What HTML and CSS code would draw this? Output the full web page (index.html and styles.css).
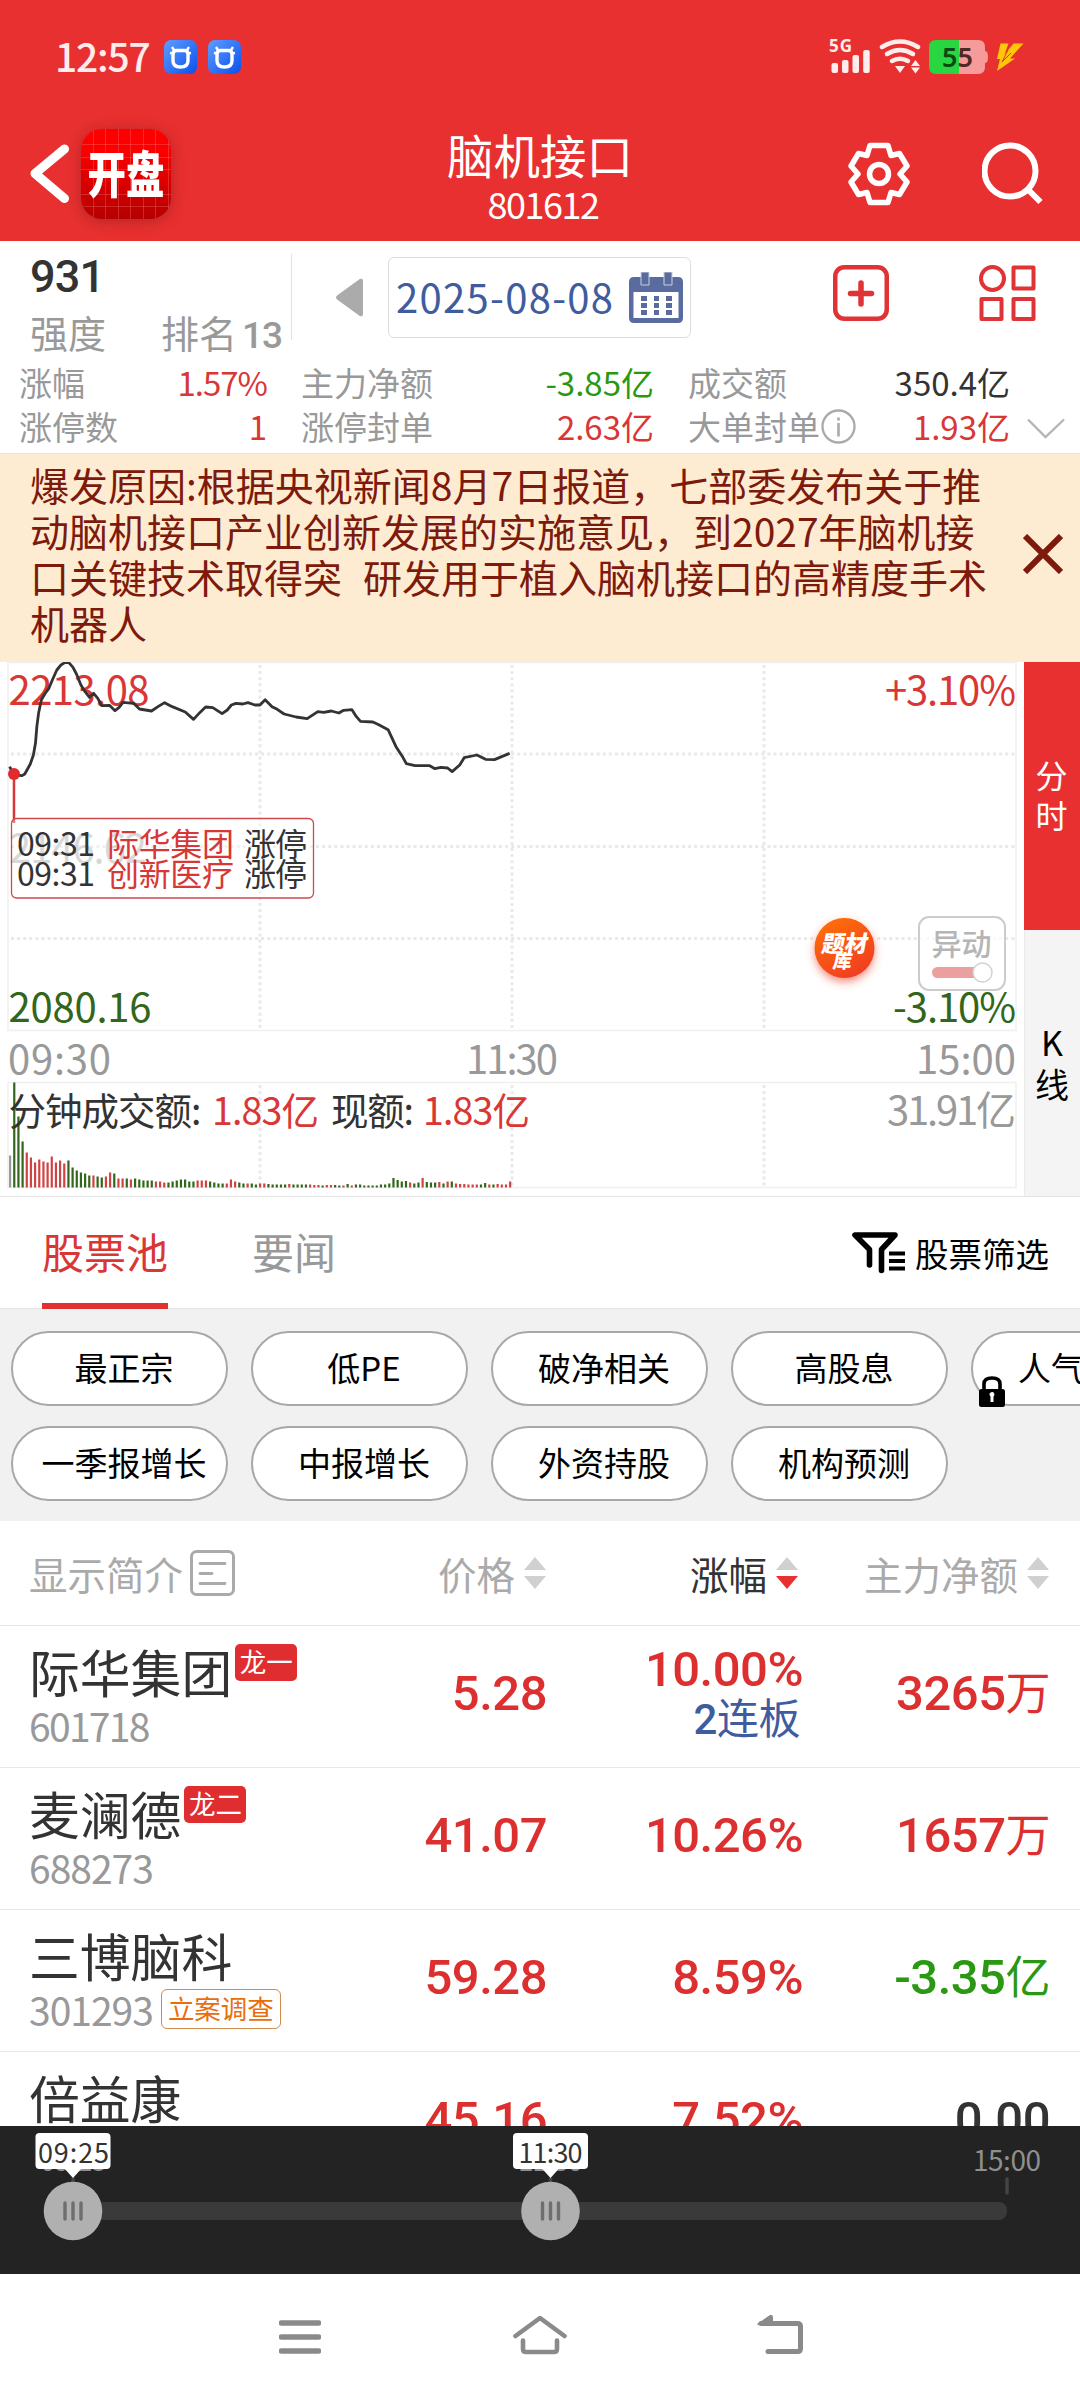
FILE: index.html
```html
<!DOCTYPE html>
<html lang="zh-CN">
<head>
<meta charset="utf-8">
<title>脑机接口 801612</title>
<link rel="stylesheet" href="styles.css">
</head>
<body>
<div class="phone">
  <header class="top">
    <div class="status">
      <div class="status-left">
        <span class="clock">12:57</span>
        <svg class="app-dot" width="33" height="34" viewBox="0 0 33 34"><defs><linearGradient id="blue" x1="0" y1="0" x2="1" y2="1"><stop offset="0" stop-color="#5f9dff"/><stop offset="1" stop-color="#0a50ee"/></linearGradient></defs><rect width="33" height="34" rx="7" fill="url(#blue)"/><path d="M12.500 10.500h8q3.500 0 3.500 4v6q0 6.500-7.500 6.500T9 20.500v-6q0-4 3.500-4z" fill="none" stroke="#fff" stroke-width="3.400"/><path d="M8 7l2.500 4M25 7l-2.500 4M6 13l4 .5M27 13l-4 .5" stroke="#fff" stroke-width="2.400"/></svg>
        <svg class="app-dot" width="33" height="34" viewBox="0 0 33 34"><rect width="33" height="34" rx="7" fill="url(#blue)"/><path d="M12.500 10.500h8q3.500 0 3.500 4v6q0 6.500-7.500 6.500T9 20.500v-6q0-4 3.500-4z" fill="none" stroke="#fff" stroke-width="3.400"/><path d="M8 7l2.500 4M25 7l-2.500 4M6 13l4 .5M27 13l-4 .5" stroke="#fff" stroke-width="2.400"/></svg>
      </div>
      <svg width="200" height="40" viewBox="826 37 200 40">
        <text class="net" x="829" y="52" textLength="23">5G</text>
        <g fill="#ffecec"><rect x="831.500" y="63" width="6.500" height="10" rx="2"/><rect x="842" y="60" width="6.500" height="13" rx="2"/><rect x="852.500" y="55" width="6.500" height="18" rx="2"/><rect x="863.200" y="50" width="6.500" height="23" rx="2"/><path d="M895 66h10l-5 7z"/><path d="M911 66l4.500-6 4.500 6zM911 67.500l4.500 6 4.500-6z"/></g>
        <g fill="none" stroke="#ffecec" stroke-width="4.500" stroke-linecap="round"><path d="M882 47q18-11 36 0"/><path d="M887 54q13-8 26 0"/><path d="M892 61q8-4.500 16 0"/></g>
        <path d="M959 40h19q7 0 7 7v4q3 0 3 6t-3 6v4q0 7-7 7h-19z" fill="#f79a9a"/>
        <path d="M959 40h-23q-7 0-7 7v20q0 7 7 7h23z" fill="#27d640"/>
        <text class="batt" x="942" y="67" textLength="15" fill="#0a4a12">5</text><text class="batt" x="957.500" y="67" textLength="15" fill="#4e2727">5</text>
        <path d="M1000.500 43.500h8l-4 11 9-11h10l-13.500 15h5L997 71l3-12h-3z" fill="#ffc60a"/><path d="M1008 50l-6 12 9-9" stroke="#e83030" stroke-width="1" fill="none"/>
      </svg>
    </div>
    <div class="titlebar">
      <div class="title-left">
        <svg width="40" height="60" viewBox="0 0 40 60"><path d="M34.500 5L5 29.500 34.500 54.500" fill="none" stroke="#fff" stroke-width="9" stroke-linecap="round" stroke-linejoin="round"/></svg>
        <div class="logo"><span>开盘</span></div>
      </div>
      <div class="title-mid"><div class="title">脑机接口</div><div class="subtitle">801612</div></div>
      <div class="title-right">
        <svg width="62" height="64" viewBox="-31 -32 62 64"><g fill="none" stroke="#fff" stroke-width="5.500" stroke-linejoin="round"><path d="M-9-28.500H9L12-18.500 20.500-20.500 28-8 21 0 28 8 20.500 20.500 12 18.500 9 28.500H-9L-12 18.500-20.500 20.500-28 8-21 0-28-8-20.500-20.500-12-18.500z"/><circle r="9.500"/></g></svg>
        <svg width="62" height="64" viewBox="0 0 62 64"><circle cx="28" cy="29" r="25.500" fill="none" stroke="#fff" stroke-width="6"/><path d="M45.500 47L58.500 60" stroke="#fff" stroke-width="6"/></svg>
      </div>
    </div>
  </header>

  <section class="info">
    <div class="info-top">
      <div class="score">
        <div class="score-num">931</div>
        <div class="score-sub"><span>强度</span><span class="rank">排名<b>13</b></span></div>
      </div>
      <svg class="prev" width="29" height="39" viewBox="0 0 29 39"><path d="M25 2L3 18q-2 1.500 0 3L25 37q2 1 2-1V3q0-2-2-1z" fill="#ababab" stroke="#ababab" stroke-width="2"/></svg>
      <div class="date"><span>2025-08-08</span>
        <svg width="54" height="51" viewBox="0 0 54 51"><path d="M5 5h44q5 0 5 5v36q0 5-5 5H5q-5 0-5-5V10q0-5 5-5z" fill="#5a6c9f"/><path d="M4.500 20h45v26h-45z" fill="#fff"/><path d="M12 0h8v13h-8zM35 0h8v13h-8z" fill="#5a6c9f" stroke="#c9d0e2"/><g fill="#5a6c9f"><path d="M12 24h6v5h-6zM25 24h5v5h-5zM37 24h6v5h-6zM12 31h6v5h-6zM25 31h5v5h-5zM37 31h6v5h-6zM12 38h6v5h-6zM25 38h5v5h-5zM37 38h6v5h-6z"/></g></svg>
      </div>
      <svg class="add" width="56" height="56" viewBox="0 0 56 56"><g fill="none" stroke="#df3335" stroke-width="4.500"><rect x="2.250" y="2.250" width="51.500" height="51.500" rx="9"/><path d="M28 18v21M17.500 28.500h21" stroke-width="5.500" stroke-linecap="round"/></g></svg>
      <svg class="apps" width="57" height="56" viewBox="0 0 57 56"><g fill="none" stroke="#df3335" stroke-width="4"><circle cx="13.500" cy="13.500" r="11.500"/><path d="M34.500 2.500h20v21h-20zM2.500 34h20v20h-20zM34.500 34h20v20h-20z" stroke-linejoin="round"/></g></svg>
    </div>
    <div class="stats">
      <div class="stat"><span>涨幅</span><b class="red tight">1.57%</b></div>
      <div class="stat"><span>主力净额</span><b class="green">-3.85亿</b></div>
      <div class="stat"><span>成交额</span><b>350.4亿</b></div>
      <div></div>
      <div class="stat"><span>涨停数</span><b class="red">1</b></div>
      <div class="stat"><span>涨停封单</span><b class="red">2.63亿</b></div>
      <div class="stat"><span class="with-icon">大单封单<svg width="35" height="35" viewBox="0 0 35 35"><circle cx="17.500" cy="17.500" r="16" fill="none" stroke="#aaa" stroke-width="2.300"/><path d="M17.500 14v13.500M17.500 8.500v3" stroke="#aaa" stroke-width="2.600"/></svg></span><b class="red">1.93亿</b></div>
      <svg class="more" width="38" height="22" viewBox="0 0 38 22"><path d="M1 1.500L18.500 19 37 1.500" fill="none" stroke="#b5b5b5" stroke-width="2.400"/></svg>
    </div>
  </section>

  <section class="notice">
    <div class="notice-text"><div>爆发原因:根据央视新闻8月7日报道，七部委发布关于推</div><div>动脑机接口产业创新发展的实施意见，到2027年脑机接</div><div>口关键技术取得突  研发用于植入脑机接口的高精度手术</div><div>机器人</div></div>
    <svg width="40" height="40" viewBox="0 0 40 40"><path d="M2 2l36 36M38 2L2 38" stroke="#7d1a0c" stroke-width="6"/></svg>
  </section>

  <section class="chart-row">
    <svg class="chart" width="1024" height="534" viewBox="0 662 1024 534">
      <defs>
        <linearGradient id="orange" x1=".2" y1="0" x2=".8" y2="1"><stop offset="0" stop-color="#ff6f08"/><stop offset="1" stop-color="#ef3a24"/></linearGradient>
        <filter id="glow" x="-50%" y="-50%" width="200%" height="200%"><feDropShadow dx="0" dy="4" stdDeviation="4" flood-color="#f0452a" flood-opacity=".6"/></filter>
      </defs>
      <g class="frame"><path d="M8 662.500H1016V1030.500H8zM8 1082.500H1016V1187.500H8z"/></g>
      <g class="dots"><path d="M11 754H1016M11 846.500H1016M11 938.500H1016M260 665V1030M512 665V1030M764 665V1030M260 1085V1187M512 1085V1187M764 1085V1187"/></g>
      <g class="axis">
        <text class="up" x="8.500" y="704.500" textLength="141">2213.08</text>
        <text class="up" x="885" y="705" textLength="131">+3.10%</text>
        <text class="mid" x="9" y="863" textLength="138">2146.62</text>
        <text class="down" x="8.500" y="1021.500" textLength="143">2080.16</text>
        <text class="down" x="893" y="1022" textLength="123">-3.10%</text>
        <text x="8" y="1073.500" textLength="103">09:30</text>
        <text x="466" y="1073.500" textLength="92">11:30</text>
        <text x="916" y="1073.500" textLength="100">15:00</text>
        <text x="887" y="1124.500" textLength="129">31.91亿</text>
      </g>
      <g id="volume"></g>
      <g class="vol-text"><text x="8.500" y="1125" textLength="193">分钟成交额:</text><text class="up" x="212" y="1125" textLength="107">1.83亿</text><text x="331" y="1125" textLength="83">现额:</text><text class="up" x="423" y="1125" textLength="107">1.83亿</text></g>
      <polyline class="price-line" transform="translate(0 650) scale(.34435 .33333)" points="28,350 40,375 64,377 72,372 88,342 97,315 103,280 107,230 112,190 120,150 130,132 142,115 152,90 165,60 177,45 188,38 200,38 212,52 222,72 235,105 247,125 260,142 272,130 284,145 295,167 318,166 334,182 346,172 357,157 388,160 405,177 440,183 460,169 478,158 500,170 538,186 562,208 580,188 597,171 618,173 645,191 660,180 672,165 685,160 705,162 720,158 740,165 755,165 770,149 790,170 805,178 825,192 860,201 892,206 923,185 940,187 962,183 984,189 998,181 1022,179 1035,200 1047,214 1083,216 1100,224 1127,239 1150,290 1170,322 1180,341 1205,347 1248,347 1263,356 1280,352 1300,354 1313,365 1335,345 1348,323 1385,315 1410,328 1436,329 1480,310"/>
      <path d="M14 774V823" stroke="#d93636" stroke-width="2.500"/><circle cx="14" cy="774" r="6" fill="#e02a2d"/>
      <rect x="11.500" y="818.500" width="302" height="79.500" rx="5" fill="#fff" fill-opacity=".35" stroke="#cf4a4c" stroke-width="1.300"/>
      <g class="tip"><text x="17" y="856" textLength="78">09:31</text><text class="up" x="107" y="856" textLength="127">际华集团</text><text x="244" y="856" textLength="63">涨停</text><text x="17" y="886" textLength="78">09:31</text><text class="up" x="107" y="886" textLength="127">创新医疗</text><text x="244" y="886" textLength="63">涨停</text></g>
      <circle cx="844.500" cy="948" r="30" fill="url(#orange)" filter="url(#glow)"/>
      <g class="lib" transform="translate(844.500 948) skewX(-10)"><text x="-23" y="4" textLength="46">题材</text><text class="lib-small" x="-9" y="20" textLength="20">库</text></g>
      <rect x="919" y="917" width="86" height="73" rx="10" fill="#fff" fill-opacity=".7" stroke="#ccc" stroke-width="2"/>
      <text class="toggle-text" x="931.500" y="954.500" textLength="60">异动</text>
      <rect x="932" y="967" width="52" height="11" rx="5.500" fill="#e9a09f"/><circle cx="982.500" cy="972.500" r="9.500" fill="#fff" stroke="#d2d2d2" stroke-width="1.500"/>
    </svg>
    <div class="side"><div class="side-tab active"><span>分</span><span>时</span></div><div class="side-tab"><span>K</span><span>线</span></div></div>
  </section>

  <section class="tabs">
    <div class="tab active">股票池</div><div class="tab">要闻</div>
    <div class="screen"><svg width="54" height="42" viewBox="0 0 54 42"><g fill="none" stroke="#000"><path d="M18.500 33V17.500L4 3H44L30.500 17.500V38.500" stroke-width="5.600" stroke-linejoin="round" stroke-linecap="round"/><path d="M38 21.500h16M38 29h16M38 36.500h16" stroke-width="4"/></g></svg>股票筛选</div>
  </section>

  <section class="pills">
    <div class="pill">最正宗</div><div class="pill">低PE</div><div class="pill">破净相关</div><div class="pill">高股息</div>
    <div class="pill locked"><svg class="lock" width="26" height="31" viewBox="0 0 26 31"><path d="M5 15V8q0-6 8-6t8 6v7" fill="none" stroke="#000" stroke-width="3.600"/><rect y="13" width="26" height="18" rx="2.500"/><path d="M10.500 19a2.500 2.500 0 1 1 4 1.500V26h-3v-5.500z" fill="#fff"/></svg>人气</div>
    <div class="pill">一季报增长</div><div class="pill">中报增长</div><div class="pill">外资持股</div><div class="pill">机构预测</div>
  </section>

  <section class="thead">
    <div class="th first">显示简介<svg width="45" height="46" viewBox="0 0 45 46"><rect x="1.500" y="1.500" width="42" height="43" rx="5" fill="none" stroke="#aaa" stroke-width="3"/><path d="M10 13.500h25M10 23.500h12M10 33.500h25" stroke="#aaa" stroke-width="2.800" stroke-linecap="round"/></svg></div>
    <div class="th">价格<svg width="22" height="32" viewBox="0 0 22 32"><path d="M0 13L11 0 22 13zM0 19h22L11 32z" fill="#d0d0d0"/></svg></div>
    <div class="th sorted">涨幅<svg width="22" height="32" viewBox="0 0 22 32"><path d="M0 13L11 0 22 13z" fill="#d0d0d0"/><path d="M0 19h22L11 32z" fill="#e83030"/></svg></div>
    <div class="th">主力净额<svg width="22" height="32" viewBox="0 0 22 32"><path d="M0 13L11 0 22 13zM0 19h22L11 32z" fill="#d0d0d0"/></svg></div>
  </section>

  <section class="list">
    <div class="row">
      <div class="stock"><div class="name">际华集团<i class="dragon">龙一</i></div><div class="code"><span class="narrow">601718</span></div></div>
      <div class="val">5.28</div><div class="val two"><div>10.00%</div><div class="boards">2<em>连板</em></div></div><div class="val">3265<em>万</em></div>
    </div>
    <div class="row">
      <div class="stock"><div class="name">麦澜德<i class="dragon">龙二</i></div><div class="code">688273</div></div>
      <div class="val">41.07</div><div class="val">10.26%</div><div class="val">1657<em>万</em></div>
    </div>
    <div class="row">
      <div class="stock"><div class="name">三博脑科</div><div class="code">301293<i class="probe">立案调查</i></div></div>
      <div class="val">59.28</div><div class="val">8.59%</div><div class="val fall">-3.35<em>亿</em></div>
    </div>
    <div class="row">
      <div class="stock"><div class="name">倍益康</div></div>
      <div class="val">45.16</div><div class="val">7.52%</div><div class="val flat">0.00</div>
    </div>
  </section>

  <section class="slider">
    <svg width="1080" height="148" viewBox="0 2126 1080 148">
      <g class="ticks"><text x="40" y="2171" textLength="67">09:25</text><text x="518" y="2171" textLength="65">11:30</text><text x="973" y="2171" textLength="68">15:00</text></g>
      <path d="M73 2179v14M550.500 2179v14M1007 2179v14" stroke="#444" stroke-width="3.500" stroke-linecap="round"/>
      <rect x="64" y="2202" width="943" height="18" rx="8" fill="#3a3a3a"/>
      <g fill="#b0b0b0"><circle cx="73" cy="2211" r="29.300"/><circle cx="550.500" cy="2211" r="29.300"/></g>
      <path d="M65 2203v16M73 2203v16M81 2203v16M542.500 2203v16M550.500 2203v16M558.500 2203v16" stroke="#6e6e6e" stroke-width="3.400" stroke-linecap="round"/>
      <g fill="#fff"><rect x="35.500" y="2133" width="75" height="36" rx="4"/><path d="M64 2168h18l-9 10z"/><rect x="513" y="2133" width="75" height="36" rx="4"/><path d="M541.500 2168h18l-9 10z"/></g>
      <g class="bubble"><text x="38" y="2162.500" textLength="71">09:25</text><text x="518.500" y="2162.500" textLength="64">11:30</text></g>
    </svg>
  </section>

  <nav class="nav">
    <svg width="42" height="40" viewBox="0 0 42 40"><path d="M2.500 8h37M2.500 22h37M2.500 36h37" stroke="#8a8a8a" stroke-width="5.500" stroke-linecap="round"/></svg>
    <svg width="54" height="40" viewBox="0 0 54 40"><g fill="none" stroke="#8a8a8a" stroke-width="4.600" stroke-linecap="round" stroke-linejoin="round"><path d="M2.500 21L27 3 51.500 21"/><path d="M10 25.500V34q0 3 3 3h28q3 0 3-3V25.500"/></g></svg>
    <svg width="46" height="40" viewBox="0 0 46 40"><path d="M4 8.500H40.500q3 0 3 3V33.500q0 3-3 3H11" fill="none" stroke="#8a8a8a" stroke-width="5" stroke-linecap="round"/><path d="M0 9L13 0q3-1 3 3v7H2q-2 0-2-1z" fill="#8a8a8a"/></svg>
  </nav>
</div>
<script src="chart.js"></script>
</body>
</html>
```

FILE: styles.css
```css
* { box-sizing: border-box; }
body { margin: 0; background: #fff; font-family: "Noto Sans CJK SC", sans-serif; color: #333; }
svg { display: block; flex: none; }
b, i, em { font-weight: 400; font-style: normal; }
.phone { width: 1080px; height: 2400px; overflow: hidden; display: flex; flex-direction: column; }
.phone > * { flex: none; }
.red, .up { color: #d93636; fill: #d93636; }
.green { color: #2a9812; }

/* header */
.top { height: 241px; background: #e83030; color: #fff; }
.status { height: 114px; padding: 0 54px 0 55px; display: flex; align-items: center; justify-content: space-between; }
.status-left { display: flex; align-items: center; }
.clock { width: 109px; font-size: 39px; line-height: 40px; font-weight: 500; letter-spacing: -1.2px; color: #ffecec; padding-bottom: 5px; }
.app-dot { margin-right: 11px; }
.net { font: 700 17px "Noto Sans", sans-serif; fill: #ffecec; }
.batt { font: 600 27px "Noto Sans", sans-serif; }
.titlebar { height: 127px; display: grid; grid-template-columns: 360px 360px 360px; }
.title-left { display: flex; align-items: center; gap: 11px; padding: 0 0 7px 30px; }
.logo { width: 90px; height: 90px; border-radius: 21px; display: flex; justify-content: center; font-weight: 900; font-size: 40px; line-height: 86px;
  background: repeating-linear-gradient(90deg, transparent 0 11.500px, rgba(255,140,140,.28) 11.500px 12.500px), repeating-linear-gradient(0deg, transparent 0 11.500px, rgba(255,140,140,.28) 11.500px 12.500px), linear-gradient(#fe0000, #fa0000 25%, #b40000);
  box-shadow: 0 2px 14px rgba(100,20,20,.4); }
.logo span { transform: scale(.96, 1.26); }
.title-mid { text-align: center; padding-top: 9px; }
.title { font-size: 46.500px; line-height: 61px; }
.subtitle { font-size: 36px; line-height: 40px; letter-spacing: -1.5px; margin-top: -1px; padding-left: 6px; }
.title-right { display: flex; gap: 72px; padding: 28px 0 0 128px; }

/* sector summary */
.info { height: 213px; border-bottom: 1px solid #e6e6e6; }
.info-top { height: 112px; display: flex; align-items: center; }
.score { width: 292px; height: 86px; padding-left: 30px; border-right: 1px solid #e2e2e2; }
.score-num { font: 500 45px/46px Roboto, sans-serif; letter-spacing: -.8px; }
.score-sub { display: flex; gap: 55px; margin: 11px -20px 0 0; font-size: 38px; line-height: 42px; color: #999; }
.rank b { font: 500 37px/42px Roboto, sans-serif; margin-left: 5px; letter-spacing: -1px; }
.prev { margin-left: 43px; }
.date { margin-left: 24px; width: 303px; height: 81px; border: 1px solid #ddd; border-radius: 6px; display: flex; align-items: center; gap: 10px; padding-left: 7px; font-size: 40px; letter-spacing: 1.3px; color: #3f5c9f; }
.date span { width: 223px; line-height: 60px; padding-bottom: 2px; white-space: nowrap; }
.add { margin: 0 0 8px 142px; }
.apps { margin: 0 0 8px 90px; }
.stats { display: grid; grid-template-columns: 248px 353px 322px 38px; column-gap: 34px; grid-auto-rows: 44px; padding: 7px 0 0 19px; font-size: 33px; line-height: 44px; }
.stat { display: flex; justify-content: space-between; color: #999; }
.stat b:not([class]) { color: #333; }
.tight { letter-spacing: -1px; }
.with-icon { display: flex; align-items: center; gap: 1px; }
.more { margin: 14px 0 0 -17px; }

/* notice */
.notice { height: 208px; background: #feecd2; color: #7d1a0c; display: flex; justify-content: space-between; padding: 7px 17px 0 30px; font-size: 39px; line-height: 46px; }
.notice-text { white-space: pre; word-spacing: 1.8px; }
.notice svg { margin-top: 73px; }

/* intraday chart */
.chart-row { height: 535px; display: flex; border-bottom: 1px solid #e6e6e6; }
.frame { fill: none; stroke: #f0f0f0; stroke-width: 1.500; }
.dots { fill: none; stroke: #e9e9e9; stroke-width: 3; stroke-dasharray: 3 3.100; }
.axis { font-size: 40px; fill: #999; }
.axis .up, .vol-text .up, .tip .up { fill: #d93636; }
.axis .down { fill: #32661a; }
.axis .mid { fill: #c4c4c4; }
.vol-text { font-size: 37.500px; fill: #333; }
.tip { font-size: 32px; fill: #333; }
.lib { font-size: 23px; font-weight: 900; fill: #fff; }
.lib-small { font-size: 19px; }
.toggle-text { font-size: 30px; font-weight: 500; fill: #b5b5b5; }
.price-line { fill: none; stroke: #333; stroke-width: 2.800; vector-effect: non-scaling-stroke; stroke-linejoin: round; }
.side { width: 56px; display: flex; flex-direction: column; }
.side-tab { flex: 1; display: flex; flex-direction: column; align-items: center; background: #f4f4f4; color: #000; font-size: 34px; line-height: 42px; padding: 91px 1px 0 0; border-left: 1px solid #eaeaea; }
.side-tab.active { background: #e83030; color: #fff; font-size: 32px; line-height: 39.500px; padding-top: 93px; border: 0; }

/* tabs */
.tabs { height: 112px; display: flex; border-bottom: 1px solid #e4e4e4; padding-left: 42px; font-size: 42px; line-height: 107px; color: #999; }
.tab { margin-right: 84px; height: 112px; }
.tab.active { color: #d93636; border-bottom: 6px solid #e03030; }
.screen { margin-left: auto; margin-right: 31px; display: flex; gap: 10px; color: #000; font-size: 33.500px; line-height: 111px; }
.screen svg { margin-top: 35px; }

/* filter pills */
.pills { height: 212px; background: #f1f1f1; padding: 22px 0 0 11px; display: grid; grid-template-columns: repeat(5, 217px); grid-auto-rows: 75px; gap: 20px 23px; font-size: 33px; color: #000; overflow: hidden; }
.pill { background: #fff; border: 2px solid #a8a8a8; border-radius: 38px; text-align: center; line-height: 69px; padding-left: 9px; white-space: nowrap; }
.pill.locked { position: relative; text-align: left; padding-left: 45px; }
.lock { position: absolute; left: 6px; top: 43px; }

/* table */
.thead, .row { display: grid; grid-template-columns: 301px 217px 256px 247px; padding-left: 29px; border-bottom: 1px solid #e8e8e8; }
.thead { height: 105px; font-size: 38.500px; line-height: 103px; color: #aaa; }
.th { display: flex; align-items: center; justify-content: flex-end; gap: 9px; padding-right: 1px; }
.th.first { justify-content: flex-start; gap: 7px; }
.th.sorted { color: #333; padding-right: 5px; }
.list { height: 500px; overflow: hidden; }
.row { height: 142px; }
.stock { padding-top: 15px; }
.name { font-size: 50.800px; line-height: 60px; display: flex; align-items: flex-start; white-space: nowrap; }
.dragon { width: 62px; height: 37px; margin: 3px 0 0 3px; border-radius: 5px; background: #e02d30; color: #fff; font-size: 26.500px; line-height: 33px; text-align: center; }
.code { margin-top: 4px; font-size: 39px; line-height: 40px; letter-spacing: -1px; color: #999; display: flex; align-items: center; white-space: nowrap; }
.narrow { letter-spacing: -1.700px; }
.probe { width: 120px; height: 40px; margin: 0 0 0 8px; border: 1.500px solid #cf8a4c; border-radius: 6px; color: #ea6d0c; font-size: 26.500px; line-height: 35px; text-align: center; letter-spacing: 0; }
.val { font: 500 49px/136px Roboto, "Noto Sans CJK SC", sans-serif; letter-spacing: -.5px; text-align: right; color: #dc2f2f; white-space: nowrap; }
.val em { font: 400 45px "Noto Sans CJK SC", sans-serif; line-height: 0; }
.two { padding-top: 19px; line-height: 50px; }
.boards { font-size: 42px; font-weight: 500; padding-right: 3px; color: #3f5c9f; }
.boards em { font-size: 42px; }
.val.fall { color: #2a9812; }
.val.flat { color: #333; }

/* time slider and system bar */
.slider { height: 148px; background: #232323; }
.ticks { font-size: 28px; fill: #8f8f8f; }
.bubble { font-size: 27px; fill: #333; }
.nav { height: 126px; display: flex; gap: 192px; padding: 41px 0 0 279px; }
.nav svg:last-child { margin-left: -2px; }
```

FILE: chart.js
```js
// One entry per minute: n = opening auction, g = falling, r = rising, then bar height.
const minutes = "n32 g105 g71 g46 r35 r30 r25 r28 r26 r25 r31 r25 r27 r24 g27 g20 g17 g15 g14 g12 r12 g11 g10 r11 r15 g14 r9 r9 g9 r8 g9 g8 g7 g7 g7 r6 r6 r5 g5 g6 g7 g8 g8 g6 g6 r7 r7 r7 g6 g5 g4 g4 r4 r8 r6 g5 g4 r4 g4 g3 r4 r4 g3.5 g3 g3 g3 g3 r3.5 g3 g3 g3 g3 r3 r2.5 r2.5 g2 r2.5 r2.5 g2.5 g2 r2 g3.5 r2 g3 g3 g2 g2 g2 g2 g3 g3 g4 g9.5 g7.5 g6 g6.5 r5 g4 g5 r9.5 g5.5 g5 g5 r5.5 g4 r6 g6 r4 r3.5 r3.5 r3 r3 r3 g3 g4.500 r3 g3 r3.5 r3 r3 r6".split(" ");
const fills = { n: "#999", g: "#32661a", r: "#cf4344" };
document.getElementById("volume").innerHTML = minutes.map((m, i) => {
  const h = +m.slice(1);
  return `<rect x="${(9 + i * 4.167).toFixed(2)}" y="${1187.5 - h}" width="2.2" height="${h}" fill="${fills[m[0]]}"/>`;
}).join("");
```
